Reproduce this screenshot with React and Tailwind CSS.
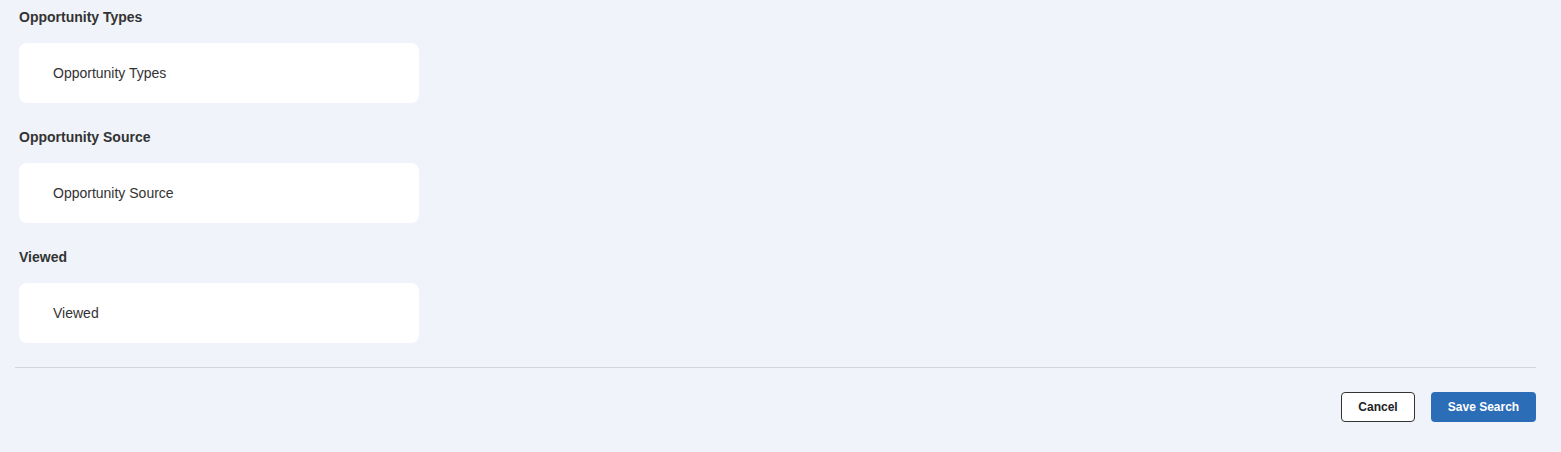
import React from 'react';

const FIELDS = ['Opportunity Types', 'Opportunity Source', 'Viewed'];

function Field({ label }) {
  return (
    <div className="pt-[9px] pb-[17px]">
      <h3 className="text-[14px] leading-[16px] font-bold text-[#333333] mb-[18px]">{label}</h3>
      <div className="w-[400px] h-[60px] bg-white rounded-[8px] flex items-center pl-[34px]">
        <span className="text-[14px] leading-[16px] text-[#333333]">{label}</span>
      </div>
    </div>
  );
}

export default function App() {
  return (
    <div
      className="min-h-[452px] w-full bg-[#f0f3fa] pl-[15px] pr-[25px]"
      style={{ fontFamily: '"Liberation Sans", Arial, sans-serif' }}
    >
      <div className="pl-[4px]">
        {FIELDS.map(f => (
          <Field key={f} label={f} />
        ))}
      </div>
      <div className="border-t border-[#d3d5db] mt-[7px]" />
      <div className="flex justify-end gap-[16px] pt-[24px]">
        <button className="w-[74px] h-[30px] bg-white border border-[#333333] rounded-[4px] text-[12px] font-bold text-[#222222]">
          Cancel
        </button>
        <button className="w-[105px] h-[30px] bg-[#2b6db7] rounded-[4px] text-[12px] font-bold text-white">
          Save Search
        </button>
      </div>
    </div>
  );
}
